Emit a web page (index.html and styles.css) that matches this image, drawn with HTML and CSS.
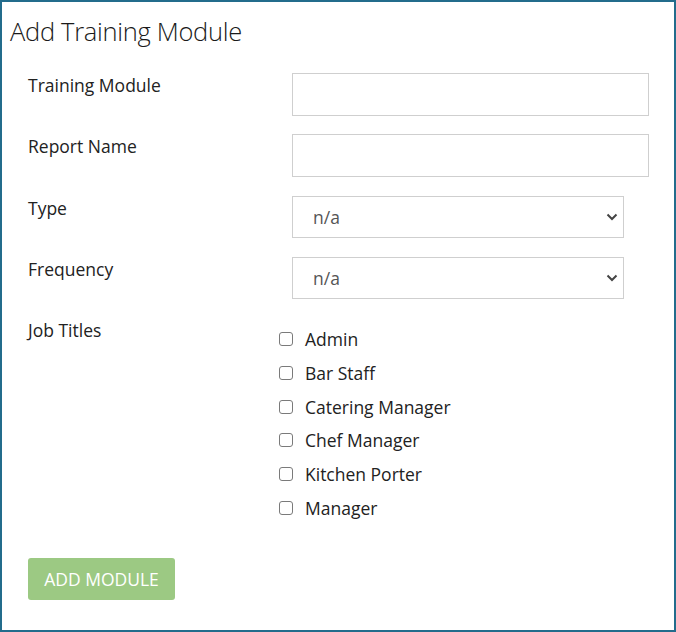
FILE: index.html
```html
<!DOCTYPE html>
<html>
<head>
<meta charset="utf-8">
<link rel="stylesheet" href="styles.css">
</head>
<body>
<div class="panel">
  <h1 class="title">Add Training Module</h1>
  <form class="form">
    <div class="row">
      <label class="label">Training Module</label>
      <input class="input" type="text">
    </div>
    <div class="row">
      <label class="label">Report Name</label>
      <input class="input" type="text">
    </div>
    <div class="row">
      <label class="label">Type</label>
      <div class="select">
        <span class="select-text">n/a</span>
        <svg class="chev" width="12" height="8" viewBox="0 0 12 8"><path d="M1.5 1.5 L6 6 L10.5 1.5" fill="none" stroke="#444" stroke-width="2"/></svg>
      </div>
    </div>
    <div class="row">
      <label class="label">Frequency</label>
      <div class="select">
        <span class="select-text">n/a</span>
        <svg class="chev" width="12" height="8" viewBox="0 0 12 8"><path d="M1.5 1.5 L6 6 L10.5 1.5" fill="none" stroke="#444" stroke-width="2"/></svg>
      </div>
    </div>
    <div class="row row-checks">
      <label class="label">Job Titles</label>
      <ul class="checks">
        <li class="check"><span class="box"></span>Admin</li>
        <li class="check"><span class="box"></span>Bar Staff</li>
        <li class="check"><span class="box"></span>Catering Manager</li>
        <li class="check"><span class="box"></span>Chef Manager</li>
        <li class="check"><span class="box"></span>Kitchen Porter</li>
        <li class="check"><span class="box"></span>Manager</li>
      </ul>
    </div>
    <button class="btn" type="button">ADD MODULE</button>
  </form>
</div>
</body>
</html>
```
FILE: styles.css
```css
* { box-sizing: border-box; }
html, body { margin: 0; padding: 0; background: #fff; }
body {
  font-family: "Open Sans", "Noto Sans", sans-serif;
  color: #222;
}
.panel {
  width: 676px;
  height: 632px;
  border: 2px solid #236c8c;
  padding: 0 0 0 8px;
}
.title {
  margin: 0;
  padding-top: 12px;
  font-size: 25.5px;
  font-weight: 300;
  line-height: 34px;
  color: #1a1a1a;
  letter-spacing: -0.3px;
}
.form {
  padding-left: 18px;
  margin-top: 25px;
}
.row {
  display: grid;
  grid-template-columns: 264px 1fr;
  margin-bottom: 19.3px;
  height: 42px;
}
.label {
  font-size: 17.5px;
  line-height: 24px;
  padding-top: 0;
  color: #222;
}
.input {
  width: 357px;
  height: 43px;
  border: 1.5px solid #cfcfcf;
  margin: 0;
  padding: 0 12px;
  font: inherit;
}
.select {
  width: 332px;
  height: 42px;
  border: 1.5px solid #cfcfcf;
  display: flex;
  align-items: center;
  justify-content: space-between;
  padding: 0 5px 0 20px;
}
.select-text {
  font-size: 17.5px;
  color: #555;
}
.chev { display: block; }
.row-checks {
  height: auto;
  margin-bottom: 0;
}
.checks {
  list-style: none;
  margin: 0 0 0 -13px;
  padding: 4px 0 0 0;
}
.check {
  display: flex;
  align-items: center;
  height: 33.8px;
  font-size: 17.5px;
  color: #222;
}
.box {
  width: 14px;
  height: 14px;
  border: 1.5px solid #7a7a7a;
  border-radius: 3px;
  margin-right: 12px;
  background: #fff;
}
.btn {
  margin-top: 33px;
  width: 147px;
  height: 42px;
  border: 0;
  border-radius: 3px;
  background: #9cc983;
  color: #fff;
  font-family: "Open Sans", "Noto Sans", sans-serif;
  font-size: 17.5px;
  padding: 0;
}
```
